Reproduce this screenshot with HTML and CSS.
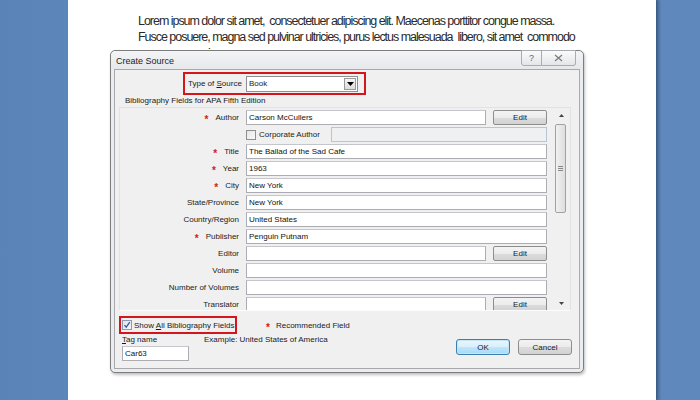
FILE: index.html
```html
<!DOCTYPE html>
<html>
<head>
<meta charset="utf-8">
<link rel="stylesheet" href="styles.css">
</head>
<body>
<div class="desk">
  <div class="page">
    <p class="doc">Lorem ipsum dolor sit amet,&nbsp; consectetuer adipiscing elit. Maecenas porttitor congue massa.<br>Fusce posuere, magna sed pulvinar ultricies, purus lectus malesuada&nbsp; libero, sit amet&nbsp; commodo<br>magna eros quis urna.</p>
  </div>
</div>

<div class="dialog">
  <div class="titlebar">
    <span class="title">Create Source</span>
    <div class="tbtns">
      <span class="tbtn help">?</span>
      <span class="tbtn close">
        <svg width="9" height="8" viewBox="0 0 9 8"><path d="M1 1 L8 7 M8 1 L1 7" stroke="#7a7a7a" stroke-width="1.2" fill="none"/></svg>
      </span>
    </div>
  </div>
  <div class="client">
    <div class="typerow">
      <span class="typelabel">Type of <u>S</u>ource</span>
      <div class="select">
        <span class="selval">Book</span>
        <span class="selbtn"><svg width="7" height="4" viewBox="0 0 7 4"><path d="M0 0 H7 L3.5 4 Z" fill="#000"/></svg></span>
      </div>
    </div>
    <div class="biblabel">Bibliography Fields for APA Fifth Edition</div>
    <div class="panel">
      <div class="rows">
        <div class="lbl"><span class="star">*</span>Author</div>
        <div class="fld split"><span class="input">Carson McCullers</span><span class="btn">Edit</span></div>

        <div class="lbl"></div>
        <div class="fld split corp"><span class="chk"></span><span class="corplabel">Corporate Author</span><span class="input disabled"></span></div>

        <div class="lbl"><span class="star">*</span>Title</div>
        <div class="fld"><span class="input">The Ballad of the Sad Cafe</span></div>

        <div class="lbl"><span class="star">*</span>Year</div>
        <div class="fld"><span class="input">1963</span></div>

        <div class="lbl"><span class="star">*</span>City</div>
        <div class="fld"><span class="input">New York</span></div>

        <div class="lbl">State/Province</div>
        <div class="fld"><span class="input">New York</span></div>

        <div class="lbl">Country/Region</div>
        <div class="fld"><span class="input">United States</span></div>

        <div class="lbl"><span class="star">*</span>Publisher</div>
        <div class="fld"><span class="input">Penguin Putnam</span></div>

        <div class="lbl">Editor</div>
        <div class="fld split"><span class="input"></span><span class="btn">Edit</span></div>

        <div class="lbl">Volume</div>
        <div class="fld"><span class="input"></span></div>

        <div class="lbl">Number of Volumes</div>
        <div class="fld"><span class="input"></span></div>

        <div class="lbl">Translator</div>
        <div class="fld split"><span class="input"></span><span class="btn">Edit</span></div>
      </div>
      <div class="scrollbar">
        <span class="arrow"><svg width="5" height="3" viewBox="0 0 5 3"><path d="M0 3 H5 L2.5 0 Z" fill="#444"/></svg></span>
        <div class="track">
          <div class="thumb"><span class="grip"></span></div>
        </div>
        <span class="arrow"><svg width="5" height="3" viewBox="0 0 5 3"><path d="M0 0 H5 L2.5 3 Z" fill="#444"/></svg></span>
      </div>
    </div>
    <div class="bottom">
      <div class="leftcol">
        <div class="showall"><span class="chk checked"><svg width="8" height="8" viewBox="0 0 8 8"><path d="M1.5 4.2 L3.2 6.2 L6.8 1.2" stroke="#3a5a9a" stroke-width="1.3" fill="none"/></svg></span><span>Show <u>A</u>ll Bibliography Fields</span></div>
        <div class="tagrow">
          <span class="taglbl"><u>T</u>ag name</span>
          <span class="example">Example: United States of America</span>
        </div>
        <span class="input tag">Car63</span>
      </div>
      <div class="rightcol">
        <div class="rec"><span class="star">*</span><span>Recommended Field</span></div>
        <div class="buttons">
          <span class="btn big ok">OK</span>
          <span class="btn big">Cancel</span>
        </div>
      </div>
    </div>
  </div>
</div>
</body>
</html>
```
FILE: styles.css
```css
html, body {
  margin: 0;
  padding: 0;
}
body {
  width: 700px;
  height: 400px;
  overflow: hidden;
  position: relative;
  font-family: "Liberation Sans", Arial, sans-serif;
}
.desk {
  width: 700px;
  height: 400px;
  background: linear-gradient(90deg, #5a83b6 0%, #5d87bb 9.7%, #4f77a9 93.8%, #5f89bd 94.5%, #5f89bd 100%);
  display: flex;
}
.page {
  margin-left: 68px;
  width: 588px;
  height: 400px;
  background: #fff;
  box-shadow: 2px 0 3px rgba(30, 50, 80, 0.45);
}
.doc {
  margin: 0;
  padding: 13px 0 0 70px;
  font-size: 12.5px;
  line-height: 16px;
  letter-spacing: -1.03px;
  word-spacing: 0;
  color: #2a2a2a;
  white-space: nowrap;
}

.dialog {
  position: absolute;
  left: 110px;
  top: 50px;
  width: 472px;
  height: 321px;
  border: 1px solid #7d7d7d;
  border-radius: 5px;
  background: #e9edf1;
  box-shadow: 1px 2px 3px rgba(0, 0, 0, 0.25);
  display: flex;
  flex-direction: column;
  font-size: 8px;
  color: #1a1a1a;
}
.titlebar {
  height: 18px;
  display: flex;
  align-items: flex-start;
  justify-content: space-between;
  padding: 0 5px 0 5px;
  background: linear-gradient(#f3f4f6, #e6e8eb);
  border-radius: 5px 5px 0 0;
}
.title {
  margin-top: 5px;
  font-size: 9px;
  color: #222;
}
.tbtns {
  display: flex;
  margin-top: -1px;
  margin-right: 2px;
}
.tbtn {
  height: 14px;
  border: 1px solid #a9adb2;
  background: linear-gradient(#fbfbfb, #e4e6e9);
  display: flex;
  align-items: center;
  justify-content: center;
  color: #666;
  font-size: 9px;
}
.help {
  width: 19px;
  border-radius: 0 0 0 3px;
}
.close {
  width: 33px;
  border-left: none;
  border-radius: 0 0 3px 0;
}
.client {
  flex: 1;
  margin: 0 3px 3px 3px;
  border: 1px solid #a9a9a9;
  background: #f0f0f0;
  padding: 0 3px 0 4px;
  display: flex;
  flex-direction: column;
}
.typerow {
  margin: 2px 0 0 64px;
  width: 179px;
  height: 19px;
  border: 2px solid #d4161c;
  display: flex;
  align-items: center;
}
.typelabel {
  width: 61px;
  padding-left: 3px;
  box-sizing: border-box;
}
.select {
  width: 110px;
  height: 14px;
  border: 1px solid #8e8f8f;
  background: #fff;
  display: flex;
  align-items: center;
  justify-content: space-between;
}
.selval {
  padding-left: 2px;
}
.selbtn {
  width: 12px;
  height: 12px;
  margin-right: 1px;
  border: 1px solid #9a9a9a;
  box-sizing: border-box;
  background: linear-gradient(#f6f6f6, #dcdcdc);
  display: flex;
  align-items: center;
  justify-content: center;
}
.biblabel {
  margin: 0 0 0 6px;
  height: 11px;
  line-height: 11px;
}
.panel {
  margin-top: 1px;
  width: 452px;
  height: 204px;
  border: 1px solid #e2e2e2;
  border-bottom-color: #fcfcfc;
  box-sizing: border-box;
  display: flex;
  overflow: hidden;
}
.rows {
  display: grid;
  grid-template-columns: 119px 301px;
  grid-auto-rows: 17px;
  column-gap: 7px;
  padding-top: 1px;
  height: 202px;
  overflow: hidden;
  align-content: start;
}
.lbl {
  display: flex;
  align-items: center;
  justify-content: flex-end;
  color: #222;
}
.star {
  color: #d11a22;
  font-size: 10px;
  font-weight: bold;
  margin-right: 7px;
  position: relative;
  top: 2px;
}
.fld {
  display: flex;
  align-items: center;
}
.input {
  box-sizing: border-box;
  height: 15px;
  width: 100%;
  border: 1px solid #abadb3;
  border-top-color: #c4c6cb;
  background: #fff;
  padding-left: 2px;
  display: flex;
  align-items: center;
  color: #111;
}
.split .input {
  width: 240px;
}
.btn {
  box-sizing: border-box;
  height: 15px;
  width: 54px;
  margin-left: 7px;
  border: 1px solid #8d8d8d;
  border-radius: 2px;
  background: linear-gradient(#f3f3f3 0%, #ececec 50%, #dcdcdc 51%, #d2d2d2 100%);
  display: flex;
  align-items: center;
  justify-content: center;
  color: #222;
}
.chk {
  box-sizing: border-box;
  flex-shrink: 0;
  width: 10px;
  height: 10px;
  border: 1px solid #8e8f8f;
  background: linear-gradient(135deg, #e6e6e6, #fafafa);
  display: flex;
  align-items: center;
  justify-content: center;
}
.corplabel {
  margin-left: 3px;
  width: 72px;
}
.corp .input.disabled {
  width: 216px;
  background: #eef0f2;
  border-color: #b8c5d6;
}
.scrollbar {
  margin-left: 8px;
  width: 12px;
  height: 202px;
  display: flex;
  flex-direction: column;
  align-items: center;
}
.arrow {
  height: 14px;
  display: flex;
  align-items: center;
  justify-content: center;
}
.track {
  flex: 1;
  width: 12px;
}
.thumb {
  box-sizing: border-box;
  margin-top: 2px;
  width: 11px;
  height: 89px;
  border: 1px solid #a2a2a2;
  border-radius: 2px;
  background: linear-gradient(90deg, #f1f1f1, #dedede);
  display: flex;
  align-items: center;
  justify-content: center;
}
.grip {
  width: 5px;
  height: 5px;
  border-top: 1px solid #888;
  border-bottom: 1px solid #888;
  box-sizing: border-box;
  background: linear-gradient(#888, #888) center / 5px 1px no-repeat;
}
.bottom {
  display: flex;
  padding-top: 5px;
}
.leftcol {
  display: flex;
  flex-direction: column;
  width: 145px;
  flex-shrink: 0;
}
.showall {
  box-sizing: border-box;
  width: 118px;
  height: 18px;
  border: 2px solid #d4161c;
  display: flex;
  align-items: center;
  padding-left: 1px;
  white-space: nowrap;
}
.showall .chk {
  margin-right: 2px;
  border-color: #8c9bb0;
  background: linear-gradient(135deg, #dde4ee, #f5f7fa);
}
.tagrow {
  display: flex;
  margin-top: 0;
  padding-left: 3px;
  height: 11px;
  align-items: center;
  white-space: nowrap;
}
.taglbl {
  width: 82px;
  flex-shrink: 0;
}
.input.tag {
  margin: 1px 0 0 3px;
  width: 67px;
}
.rightcol {
  display: flex;
  flex-direction: column;
  align-items: flex-start;
  flex: 1;
  padding-top: 4px;
  padding-left: 2px;
}
.rec {
  display: flex;
  align-items: center;
  height: 10px;
  white-space: nowrap;
}
.rec .star {
  margin-right: 6px;
}
.buttons {
  display: flex;
  margin: 9px 0 0 190px;
}
.btn.big {
  width: 54px;
  height: 16px;
  margin-left: 0;
  margin-right: 8px;
  border-radius: 3px;
}
.btn.ok {
  border-color: #3c7fb1;
  background: linear-gradient(#eaf6fd 0%, #d9f0fc 50%, #bee6fd 51%, #a7d9f5 100%);
  box-shadow: inset 0 0 0 1px #c4e5f6;
}
```
